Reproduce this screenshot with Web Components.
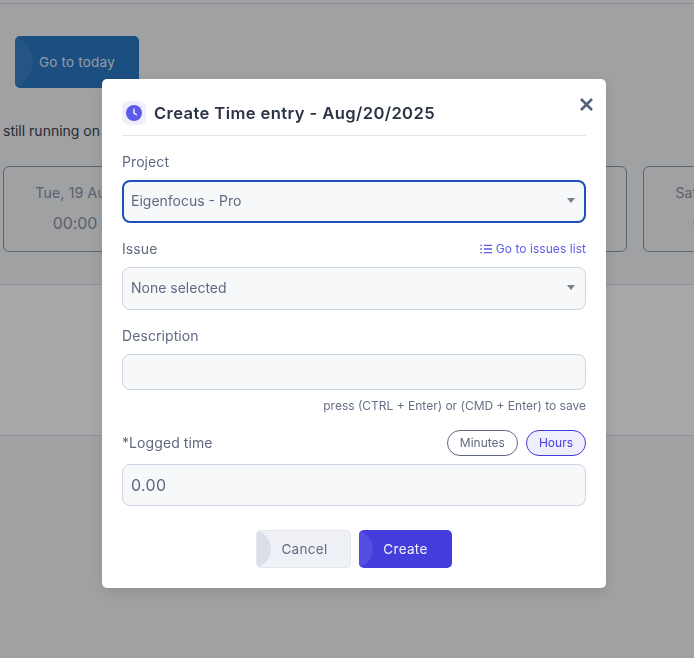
<!DOCTYPE html>
<html>
<head>
<meta charset="utf-8">
<style>
  html, body { margin: 0; height: 100%; overflow: hidden; }
  body { font-family: "Inter", "Liberation Sans", sans-serif; background: #f3f4f7; }
</style>
</head>
<body>
<time-page></time-page>
<modal-dialog>
  <form-field label="Project" gap="17"><select-box focused>Eigenfocus - Pro</select-box></form-field>
  <form-field label="Issue" gap="17">
    <issue-link slot="aside">Go to issues list</issue-link>
    <select-box>None selected</select-box>
  </form-field>
  <form-field label="Description" gap="17">
    <text-box height="36"></text-box>
    <div slot="hint">press (CTRL + Enter) or (CMD + Enter) to save</div>
  </form-field>
  <form-field label="*Logged time" gap="16" indigo>
    <unit-pill slot="aside">Minutes</unit-pill>
    <unit-pill slot="aside" active>Hours</unit-pill>
    <text-box height="42" big>0.00</text-box>
  </form-field>
</modal-dialog>

<script>
class TimePage extends HTMLElement {
  connectedCallback() {
    this.attachShadow({ mode: "open" });
    this.shadowRoot.innerHTML = `
    <style>
      :host { display: block; width: 694px; height: 658px; overflow: hidden; color: #2b3444; }
      .topline { height: 3px; border-bottom: 1px solid #d8dae0; }
      .today {
        position: relative; overflow: hidden;
        width: 124px; height: 52px; margin: 32px 0 0 15px;
        display: flex; align-items: center; padding-left: 24px; box-sizing: border-box;
        background: #2a78c4; border-radius: 5px; color: rgba(255,255,255,.88); font-size: 13.5px; letter-spacing: .2px;
      }
      .today::before {
        content: ""; position: absolute; left: -34px; top: 0; width: 52px; height: 52px;
        border-radius: 50%; background: rgba(255,255,255,.08);
      }
      .running { margin: 34px 0 0 3px; font-size: 14px; line-height: 17px; color: #3c4350; white-space: nowrap; }
      .days { display: flex; gap: 16px; margin: 27px 0 0 3px; }
      .day {
        flex: 0 0 144px; height: 86px; box-sizing: border-box;
        border: 1px solid #8b95aa; border-radius: 6px;
        text-align: center; color: #8a93a3;
      }
      .day .name { font-size: 14px; line-height: 17px; margin-top: 17px; letter-spacing: .2px; }
      .day .time { font-size: 16px; line-height: 20px; margin-top: 12px; letter-spacing: -.1px; }
      .band { height: 150px; margin-top: 32px; background: #ffffff; border-top: 1px solid #dcdcf0; border-bottom: 1px solid #dcdcf0; }
    </style>
    <div class="topline"></div>
    <div class="today">Go to today</div>
    <div class="running">still running on</div>
    <div class="days">
      <div class="day"><div class="name">Tue, 19 Aug</div><div class="time">00:00</div></div>
      <div class="day"></div>
      <div class="day"></div>
      <div class="day"></div>
      <div class="day"><div class="name">Sat, 23 Aug</div><div class="time">00:00</div></div>
    </div>
    <div class="band"></div>
    `;
  }
}

class ModalDialog extends HTMLElement {
  connectedCallback() {
    this.attachShadow({ mode: "open" });
    this.shadowRoot.innerHTML = `
    <style>
      :host { position: fixed; inset: 0; display: block; background: rgba(0,0,0,.34); }
      .box {
        position: absolute; left: 102px; top: 79px; width: 504px; height: 509px;
        box-sizing: border-box; padding: 22px 20px 20px;
        background: #fff; border-radius: 5px;
        box-shadow: 0 4px 14px rgba(0,0,0,.12);
      }
      header {
        display: flex; gap: 8px; align-items: flex-start;
        height: 34px; border-bottom: 1px solid #e5e7ee;
      }
      .badge { width: 24px; height: 24px; border-radius: 7px; background: #eeeefd; display: flex; align-items: center; justify-content: center; }
      h2 {
        margin: 0; font: 600 16.6px/24px "Inter", sans-serif; color: #2b3444;
        letter-spacing: .39px; white-space: nowrap;
      }
      .close { position: absolute; right: 12px; top: 18px; width: 15px; height: 15px; }
      .actions { display: flex; justify-content: center; gap: 8px; margin-top: 24px; }
      .btn {
        position: relative; overflow: hidden; box-sizing: border-box; height: 38px;
        display: flex; align-items: center; justify-content: center;
        border-radius: 5px; font: 400 13.5px "Inter", sans-serif; letter-spacing: .3px;
      }
      .btn span { position: relative; }
      .btn::before {
        content: ""; position: absolute; left: -24px; top: -1px; width: 38px; height: 38px; border-radius: 50%;
      }
      .cancel { width: 95px; background: #eff1f7; border: 1px solid #e2e6ef; color: #5f6a80; padding-left: 2px; }
      .cancel::before { background: #d9dee7; }
      .create { width: 93px; background: #453ddb; color: #f2f2ff; }
      .create::before { background: #544ee2; top: 0; }
    </style>
    <div class="box">
      <header>
        <div class="badge">
          <svg width="16" height="16" viewBox="0 0 16 16">
            <circle cx="8" cy="8" r="8" fill="#5b5bea"/>
            <path d="M8 4v4.2l2.4 1.5" fill="none" stroke="#eeeefd" stroke-width="1.5" stroke-linecap="round"/>
          </svg>
        </div>
        <h2>Create Time entry - Aug/20/2025</h2>
      </header>
      <svg class="close" viewBox="0 0 15 15"><path d="M2 2l11 11M13 2L2 13" stroke="#556178" stroke-width="2.6" fill="none"/></svg>
      <div class="fields"><slot></slot></div>
      <div class="actions">
        <div class="btn cancel"><span>Cancel</span></div>
        <div class="btn create"><span>Create</span></div>
      </div>
    </div>
    `;
  }
}

class FormField extends HTMLElement {
  connectedCallback() {
    this.attachShadow({ mode: "open" });
    var gap = this.getAttribute("gap") || "18";
    this.shadowRoot.innerHTML = `
    <style>
      :host { display: block; margin-top: ${gap}px; }
      .top { display: flex; justify-content: space-between; align-items: center; min-height: 18px; margin-bottom: 9px; }
      label { font-size: 14px; line-height: 18px; color: #5f6a80; letter-spacing: .08px; }
      :host([indigo]) .top { min-height: 26px; margin-bottom: 8px; }
      .aside { display: flex; gap: 8px; align-items: center; }
      .hint { font-size: 12px; line-height: 16px; color: #667085; text-align: right; margin-top: 8px; }
      .hint:not(:has(slot)) { display: none; }
    </style>
    <div class="top">
      <label>${this.getAttribute("label")}</label>
      <div class="aside"><slot name="aside"></slot></div>
    </div>
    <slot></slot>
    <div class="hint"><slot name="hint"></slot></div>
    `;
  }
}

class SelectBox extends HTMLElement {
  connectedCallback() {
    this.attachShadow({ mode: "open" });
    this.shadowRoot.innerHTML = `
    <style>
      :host {
        display: flex; align-items: center; justify-content: space-between;
        height: 43px; box-sizing: border-box; padding: 0 10px 2px 8px;
        background: #f7f8fa; border: 1px solid #cdd4e1; border-radius: 8px;
        font-size: 14px; color: #5f6a80;
      }
      :host([focused]) { border: 2px solid #1e50b8; padding-left: 7px; padding-right: 9px; }
      .caret { width: 0; height: 0; border-left: 4px solid transparent; border-right: 4px solid transparent; border-top: 5px solid #7b7f88; margin-top: 0; }
    </style>
    <span><slot></slot></span><span class="caret"></span>
    `;
  }
}

class TextBox extends HTMLElement {
  connectedCallback() {
    this.attachShadow({ mode: "open" });
    this.shadowRoot.innerHTML = `
    <style>
      :host {
        display: flex; align-items: center; box-sizing: border-box;
        height: ${this.getAttribute("height")}px; padding: 0 8px;
        background: #f7f8fa; border: 1px solid #cdd4e1; border-radius: 8px;
        color: #5f6a80; font-size: 14px;
      }
      :host([big]) { font-size: 16px; letter-spacing: .3px; }
    </style>
    <slot></slot>
    `;
  }
}

class IssueLink extends HTMLElement {
  connectedCallback() {
    this.attachShadow({ mode: "open" });
    this.shadowRoot.innerHTML = `
    <style>
      :host { display: inline-flex; align-items: center; gap: 4px; font-size: 12px; color: #5b5bea; letter-spacing: .05px; padding-bottom: 1px; }
      svg { width: 12px; height: 12px; }
    </style>
    <svg viewBox="0 0 12 12" fill="none" stroke="#5b5bea" stroke-width="1.3">
      <path d="M4 2.3h8M4 6h8M4 9.7h8"/>
      <path d="M0.3 2.3h1.6M0.3 6h1.6M0.3 9.7h1.6"/>
    </svg>
    <slot></slot>
    `;
  }
}

class UnitPill extends HTMLElement {
  connectedCallback() {
    this.attachShadow({ mode: "open" });
    this.shadowRoot.innerHTML = `
    <style>
      :host {
        display: inline-flex; align-items: center; justify-content: center;
        height: 26px; box-sizing: border-box; padding: 0 12px 1px;
        border: 1px solid #5f6a80; border-radius: 13px;
        font-size: 12px; color: #5f6a80;
      }
      :host([active]) { background: #eeeefc; border-color: #453ddb; color: #453ddb; }
    </style>
    <slot></slot>
    `;
  }
}

customElements.define("time-page", TimePage);
customElements.define("modal-dialog", ModalDialog);
customElements.define("form-field", FormField);
customElements.define("select-box", SelectBox);
customElements.define("text-box", TextBox);
customElements.define("issue-link", IssueLink);
customElements.define("unit-pill", UnitPill);
</script>
</body>
</html>
